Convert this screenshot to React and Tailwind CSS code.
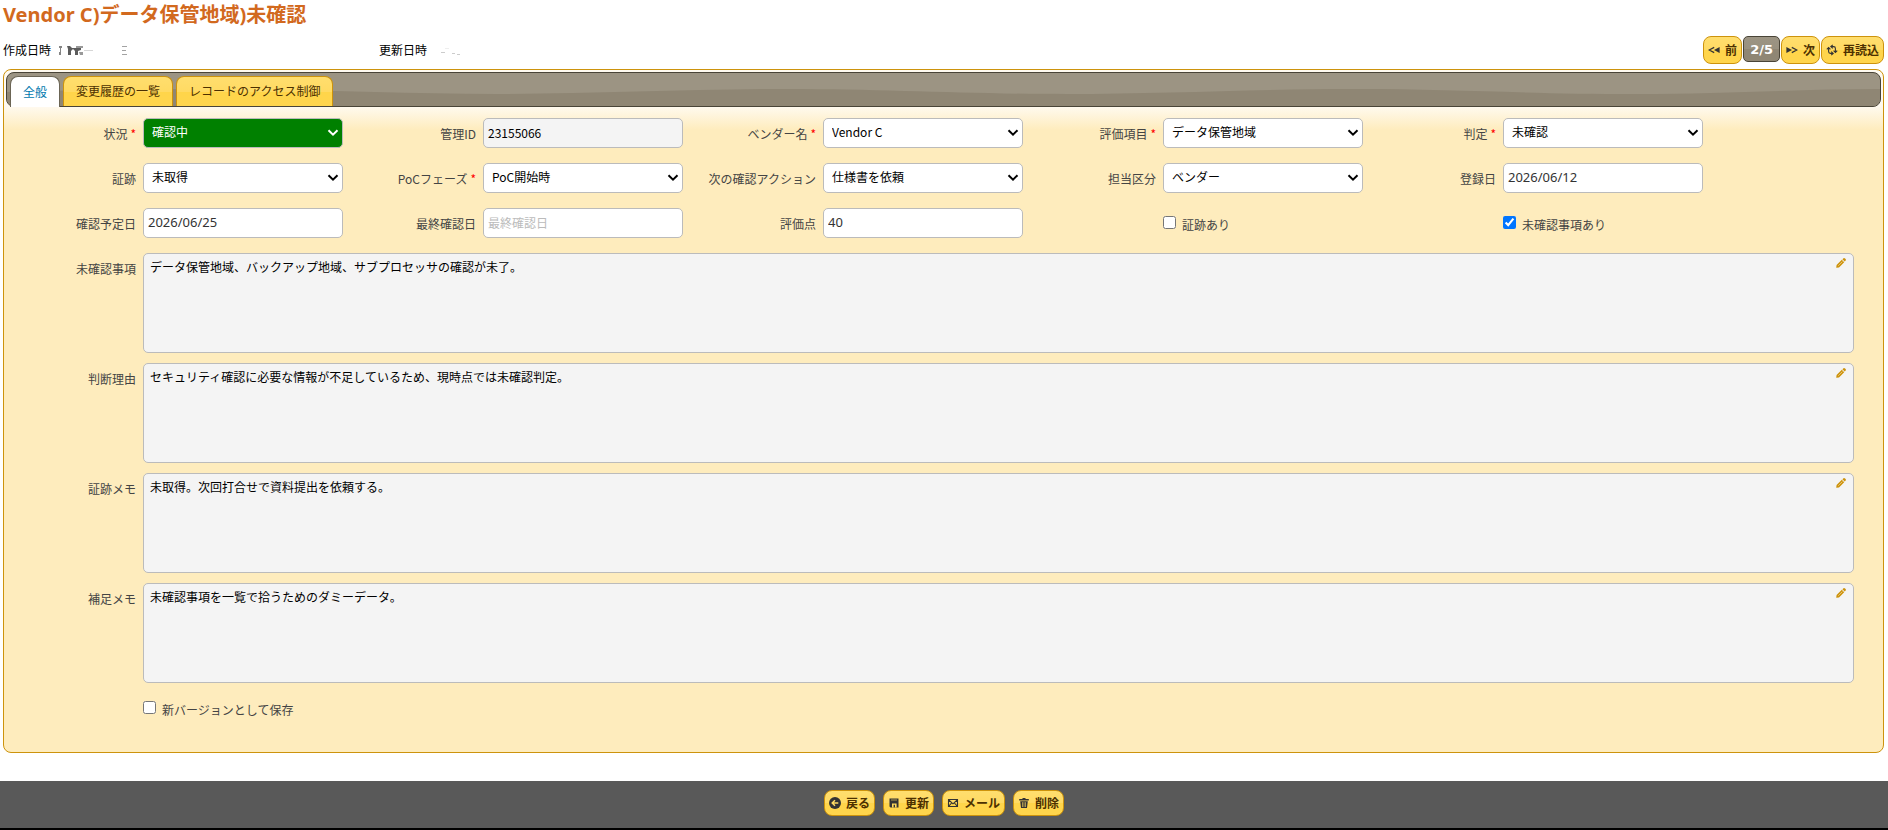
import { useState } from "react";

function Field({ id, label, required, children }) {
  return (
    <div className="flex h-[30px] w-[340px]">
      <label
        htmlFor={id}
        className="w-[127px] pt-[5px] pr-[7px] text-right text-[12px] leading-[22px] text-[#444444]"
      >
        {label}
        {required && <span className="pl-[3px] text-[#ff0000]">*</span>}
      </label>
      {children}
    </div>
  );
}

function SelectField({ id, label, required, value, green }) {
  const tone = green ? "bg-[#008000] text-white" : "bg-white text-black";
  return (
    <Field id={id} label={label} required={required}>
      <div className="relative">
        <select
          id={id}
          defaultValue={value}
          className={`h-[30px] w-[200px] appearance-none rounded-[5px] border border-[#bbbbbb] pb-[2px] pl-[8px] text-[12px] outline-none ${tone}`}
        >
          <option>{value}</option>
        </select>
        <svg
          viewBox="0 0 12 8"
          className={`pointer-events-none absolute top-[11px] right-[4px] h-[8px] w-[12px] ${green ? "text-white" : "text-black"}`}
          fill="none"
          stroke="currentColor"
          strokeWidth="2"
        >
          <path d="M1.5 1.2 6 5.7 10.5 1.2" />
        </svg>
      </div>
    </Field>
  );
}

function TextField({ id, label, value, placeholder, readOnly, wide }) {
  const tone = readOnly ? "bg-[#f4f4f4] text-black" : "bg-white text-[#333333]";
  const size = wide ? "font-['Noto_Sans','Noto_Sans_CJK_JP',sans-serif] text-[13px]" : "text-[12px]";
  return (
    <Field id={id} label={label}>
      <input
        id={id}
        type="text"
        defaultValue={value}
        placeholder={placeholder}
        readOnly={readOnly}
        className={`h-[30px] w-[200px] rounded-[5px] border border-[#bbbbbb] px-[4px] pb-[2px] outline-none placeholder:text-[#bbbbbb] ${size} ${tone}`}
      />
    </Field>
  );
}

function CheckField({ id, label, checked }) {
  return (
    <div className="flex h-[30px] w-[340px] pl-[127px]">
      <Check id={id} label={label} checked={checked} />
    </div>
  );
}

function Check({ id, label, checked }) {
  return (
    <div className="flex items-start gap-[6px] pt-[8px]">
      <input id={id} type="checkbox" defaultChecked={checked} className="size-[13px] accent-[#0075ff]" />
      <label htmlFor={id} className="text-[12px] leading-[17px] text-[#444444]">
        {label}
      </label>
    </div>
  );
}

function Memo({ id, label, value }) {
  return (
    <div className="flex">
      <label
        htmlFor={id}
        className="w-[127px] shrink-0 pt-[5px] pr-[7px] text-right text-[12px] leading-[22px] text-[#444444]"
      >
        {label}
      </label>
      <div className="relative flex-1">
        <textarea
          id={id}
          defaultValue={value}
          readOnly
          className="block h-[100px] w-full resize-none rounded-[5px] border border-[#bbbbbb] bg-[#f4f4f4] px-[6px] py-[4px] text-[12px] leading-[18px] text-black outline-none"
        />
        <button type="button" aria-label={`${label}を編集`} className="absolute top-[5px] right-[8px]">
          <svg viewBox="0 0 10 10" className="size-[10px]" fill="#cd930c">
            <path d="M0.2 9.8 0.6 7 5.8 1.8 8.2 4.2 3 9.4Z M6.4 1.3 7.5 0.3Q8.3 -0.2 9 0.5L9.6 1.1Q10.2 1.8 9.7 2.5L8.7 3.6Z" />
            <path d="M2.2 7.8 6.4 3.6" stroke="#f4e3b8" strokeWidth="0.6" />
          </svg>
        </button>
      </div>
    </div>
  );
}

function GoldButton({ icon, tall, children }) {
  return (
    <button
      type="button"
      className={`flex items-center gap-[5px] rounded-[8px] border border-[#cd930c] bg-[linear-gradient(#ffde6e_0%,#ffda63_50%,#ffd54a_51%,#ffd54d_100%)] px-[4px] text-[12px] font-bold text-[#4c3000] ${
        tall ? "h-[28px]" : "h-[26px]"
      }`}
    >
      {icon}
      <span>{children}</span>
    </button>
  );
}

const iconClass = "size-[12px] shrink-0 text-[#333333]";

const Rewind = () => (
  <svg viewBox="0 0 12 12" className={iconClass} fill="currentColor">
    <path d="M11.6 3V9L6 6Z" />
    <path d="M6.2 3.4 1.2 6 6.2 8.6" fill="none" stroke="currentColor" strokeWidth="1.2" />
  </svg>
);
const Forward = () => (
  <svg viewBox="0 0 12 12" className={iconClass} fill="currentColor">
    <path d="M0.4 3V9L6 6Z" />
    <path d="M5.8 3.4 10.8 6 5.8 8.6" fill="none" stroke="currentColor" strokeWidth="1.2" />
  </svg>
);
const Refresh = () => (
  <svg viewBox="0 0 12 12" className={iconClass} fill="none" stroke="currentColor" strokeWidth="1.1">
    <path d="M6.8 0.8 4.8 2.6 6.8 4.4M4.8 2.6H7.6Q9.4 2.6 9.4 4.4V7.4M7.6 6.6 9.4 8.4 11.2 6.6" />
    <path d="M5.2 11.2 7.2 9.4 5.2 7.6M7.2 9.4H4.4Q2.6 9.4 2.6 7.6V4.6M0.8 5.4 2.6 3.6 4.4 5.4" />
  </svg>
);
const Back = () => (
  <svg viewBox="0 0 12 12" className={iconClass}>
    <circle cx="6" cy="6" r="6" fill="currentColor" />
    <path d="M9.3 6H3.4M6 3.2 3.2 6 6 8.8" fill="none" stroke="#ffdb65" strokeWidth="1.5" />
  </svg>
);
const Disk = () => (
  <svg viewBox="0 0 12 12" className={iconClass}>
    <path d="M1.5 1.5H10.5V10.5H2.5L1.5 9.5Z" fill="currentColor" />
    <path d="M3 3H9" stroke="#ffdb65" strokeWidth="0.6" />
    <path d="M4 6.6H8.6V10.5H7V7.8H5.6V10.5H4Z" fill="#ffd95c" />
  </svg>
);
const Mail = () => (
  <svg viewBox="0 0 12 12" className={iconClass} fill="none" stroke="currentColor" strokeWidth="1.1">
    <path d="M1.5 2.5H10.5V9.5H1.5Z M1.8 3 6 6.8 10.2 3 M1.8 9.2 4.6 6 M10.2 9.2 7.4 6" />
  </svg>
);
const Trash = () => (
  <svg viewBox="0 0 12 12" className={iconClass} fill="currentColor">
    <path d="M4.5 1H7.5V2H10.8V3.4H1.2V2H4.5Z M2.2 4.2H9.8L9 11H3Z" />
    <path d="M4.5 5.2V10M6 5.2V10M7.5 5.2V10" stroke="#ffdb65" strokeWidth="0.6" />
  </svg>
);

const tabs = ["全般", "変更履歴の一覧", "レコードのアクセス制御"];

export default function App() {
  const [active, setActive] = useState(0);
  return (
    <div className="flex min-h-screen flex-col bg-white font-['Noto_Sans_CJK_JP',sans-serif] text-[12px] text-black">
      <header className="pl-[3px] pr-[4px]">
        <h1 className="h-[36px] font-['Noto_Sans','Noto_Sans_CJK_JP',sans-serif] text-[20px] leading-[30px] font-bold text-[#d2691e]">
          Vendor C)データ保管地域)未確認
        </h1>
        <div className="flex h-[33px] items-start">
          <div className="flex w-[376px] gap-[4px] pt-[5px] leading-[18px]">
            <span>作成日時</span>
            <svg viewBox="0 0 90 14" className="mt-[2px] h-[14px] w-[90px]" fill="#333333">
              <path d="M4 3H7V5H6V12H4V9H5V5H4Z" opacity="0.6" />
              <path d="M12 3H15L17 5H26V7L23 8V12H20V8L18 6L16 8V12H13V6Z" opacity="0.8" />
              <path d="M21 3H28V5H21ZM24 9H28V12H25Z" opacity="0.5" />
              <path d="M29 7H38V8H29Z" opacity="0.2" />
              <path d="M67 3H72V4H67ZM67 7H71V8H67ZM67 11H72V12H67Z" opacity="0.45" />
            </svg>
          </div>
          <div className="flex gap-[12px] pt-[5px] leading-[18px]">
            <span>更新日時</span>
            <svg viewBox="0 0 30 14" className="mt-[2px] h-[14px] w-[30px]" fill="#555555">
              <path d="M2 9H6V10H2ZM13 10H16V11H13ZM18 11H21V12H18Z" opacity="0.3" />
              <path d="M6 5H10V6H6Z" opacity="0.1" />
            </svg>
          </div>
          <nav className="ml-auto flex items-start gap-[1px]">
            <GoldButton tall icon={<Rewind />}>前</GoldButton>
            <span className="h-[26px] rounded-[5px] border border-[#494437] bg-[linear-gradient(#9c9483_0%,#999180_50%,#8f8674_51%,#8f8674_100%)] px-[6px] font-['DejaVu_Sans',sans-serif] text-[13px] leading-[26px] font-bold text-white">
              2/5
            </span>
            <GoldButton tall icon={<Forward />}>次</GoldButton>
            <GoldButton tall icon={<Refresh />}>再読込</GoldButton>
          </nav>
        </div>
      </header>

      <main className="mr-[4px] mb-[28px] ml-[3px] rounded-[8px] border border-[#cd930c] bg-[linear-gradient(#fffaf0_0px,#fffaf0_36px,#feecbd_60px)] p-[2px]">
        <div className="relative flex h-[35px] gap-[3px] rounded-[8px] border border-[#494437] bg-[#9c9483] pt-[3px] pl-[3px]">
          <svg
            viewBox="0 0 1874 33"
            preserveAspectRatio="none"
            className="absolute inset-0 h-full w-full rounded-[7px]"
            fill="#8f8674"
          >
            <path d="M0 19C70 17 130 16 200 16C300 16 390 21 490 21C590 21 680 16 780 16C880 16 960 21 1060 21C1160 21 1250 16 1350 16C1450 16 1520 21 1630 21C1720 21 1790 16 1874 16V33H0Z" />
          </svg>
          {tabs.map((tab, i) => (
            <button
              key={tab}
              type="button"
              onClick={() => setActive(i)}
              className={`relative rounded-t-[8px] border border-b-0 px-[12px] pb-[1px] text-[12px] ${
                i === active
                  ? "-mb-px border-[#6b6555] bg-white text-[#0078ae]"
                  : "border-[#cd930c] bg-[linear-gradient(#ffde6e_0%,#ffda63_50%,#ffd54a_51%,#ffd54d_100%)] text-[#4c3000]"
              }`}
            >
              {tab}
            </button>
          ))}
        </div>

        <form className="pt-[11px] pr-[27px] pb-[32px] pl-[10px]" onSubmit={(e) => e.preventDefault()}>
          <div className="flex flex-wrap gap-y-[15px]">
            <SelectField id="status" label="状況" required value="確認中" green />
            <TextField id="rid" label="管理ID" value="23155066" readOnly />
            <SelectField id="vendor" label="ベンダー名" required value="Vendor C" />
            <SelectField id="item" label="評価項目" required value="データ保管地域" />
            <SelectField id="judge" label="判定" required value="未確認" />
            <SelectField id="evidence" label="証跡" value="未取得" />
            <SelectField id="phase" label="PoCフェーズ" required value="PoC開始時" />
            <SelectField id="next" label="次の確認アクション" value="仕様書を依頼" />
            <SelectField id="owner" label="担当区分" value="ベンダー" />
            <TextField id="created" label="登録日" value="2026/06/12" wide />
            <TextField id="due" label="確認予定日" value="2026/06/25" wide />
            <TextField id="last" label="最終確認日" placeholder="最終確認日" />
            <TextField id="score" label="評価点" value="40" wide />
            <CheckField id="hasEvidence" label="証跡あり" />
            <CheckField id="hasPending" label="未確認事項あり" checked />
          </div>
          <div className="mt-[15px] flex flex-col gap-[10px]">
            <Memo id="pending" label="未確認事項" value="データ保管地域、バックアップ地域、サブプロセッサの確認が未了。" />
            <Memo id="reason" label="判断理由" value="セキュリティ確認に必要な情報が不足しているため、現時点では未確認判定。" />
            <Memo id="evidenceMemo" label="証跡メモ" value="未取得。次回打合せで資料提出を依頼する。" />
            <Memo id="note" label="補足メモ" value="未確認事項を一覧で拾うためのダミーデータ。" />
          </div>
          <div className="mt-[10px] pl-[127px]">
            <Check id="newVersion" label="新バージョンとして保存" />
          </div>
        </form>
      </main>

      <footer className="mt-auto flex h-[49px] items-start justify-center gap-[8px] border-b-2 border-black bg-[#595959] pt-[9px]">
        <GoldButton icon={<Back />}>戻る</GoldButton>
        <GoldButton icon={<Disk />}>更新</GoldButton>
        <GoldButton icon={<Mail />}>メール</GoldButton>
        <GoldButton icon={<Trash />}>削除</GoldButton>
      </footer>
    </div>
  );
}
